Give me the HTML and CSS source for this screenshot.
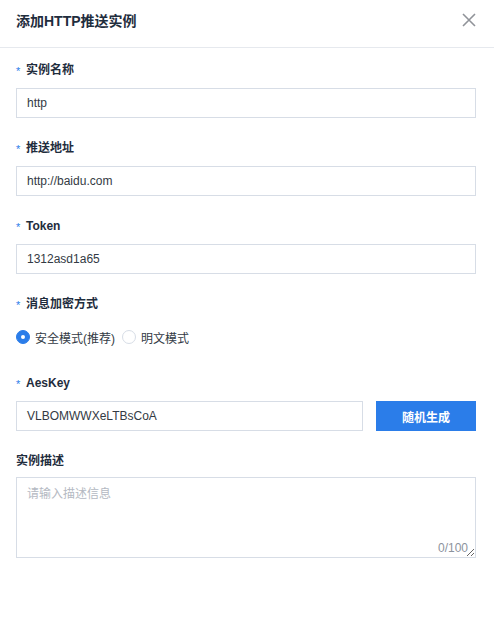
FILE: index.html
```html
<!DOCTYPE html>
<html lang="zh">
<head>
<meta charset="utf-8">
<link rel="stylesheet" href="styles.css">
</head>
<body>
<div class="dialog">
  <div class="header">
    <span class="title">添加HTTP推送实例</span>
    <svg class="close" width="14" height="14" viewBox="0 0 14 14"><path d="M1 1L13 13M13 1L1 13" stroke="#909399" stroke-width="1.6" fill="none"/></svg>
  </div>
  <div class="form">
    <div class="item">
      <div class="label"><span class="req">*</span>实例名称</div>
      <div class="input">http</div>
    </div>
    <div class="item">
      <div class="label"><span class="req">*</span>推送地址</div>
      <div class="input">http://baidu.com</div>
    </div>
    <div class="item">
      <div class="label"><span class="req">*</span>Token</div>
      <div class="input">1312asd1a65</div>
    </div>
    <div class="item">
      <div class="label"><span class="req">*</span>消息加密方式</div>
      <div class="radios">
        <span class="radio"><span class="dot on"></span>安全模式(推荐)</span>
        <span class="radio"><span class="dot"></span>明文模式</span>
      </div>
    </div>
    <div class="item">
      <div class="label"><span class="req">*</span>AesKey</div>
      <div class="row">
        <div class="input grow">VLBOMWWXeLTBsCoA</div>
        <button class="btn">随机生成</button>
      </div>
    </div>
    <div class="item">
      <div class="label short">实例描述</div>
      <div class="ta-wrap">
        <textarea class="ta" placeholder="请输入描述信息"></textarea>
        <span class="count">0/100</span>
      </div>
    </div>
  </div>
</div>
</body>
</html>
```
FILE: styles.css
```css
* { box-sizing: border-box; }
body {
  margin: 0;
  background: #fff;
  font-family: "Liberation Sans", Arial, "Noto Sans CJK SC", sans-serif;
  font-size: 12px;
  color: #1f2d3d;
}
.header {
  height: 48px;
  border-bottom: 1px solid #e6e9ee;
  display: flex;
  align-items: center;
  justify-content: space-between;
  padding: 0 18px 0 16px;
}
.title {
  font-size: 14px;
  font-weight: bold;
  color: #1f2d3d;
  margin-top: -7px;
}
.close { margin-top: -7px; }
.form {
  padding: 12px 18px 0 16px;
}
.item { margin-bottom: 20px; }
.label {
  height: 20px;
  line-height: 20px;
  font-weight: bold;
  font-size: 12px;
  color: #1f2d3d;
  margin-bottom: 8px;
  display: flex;
  align-items: center;
}
.label.short { margin-bottom: 6px; }
.req {
  color: #2b7de9;
  width: 10px;
  font-weight: normal;
  font-size: 11px;
  position: relative;
  top: 1px;
}
.input {
  height: 30px;
  border: 1px solid #d7dde6;
  line-height: 28px;
  padding: 0 10px;
  color: #333a44;
  font-size: 12px;
}
.radios {
  height: 30px;
  display: flex;
  align-items: center;
  margin-bottom: 21px;
}
.radio {
  display: inline-flex;
  align-items: center;
  color: #333a44;
  margin-right: 7px;
}
.dot {
  width: 14px;
  height: 14px;
  border-radius: 50%;
  border: 1px solid #d7dde6;
  margin-right: 5px;
  display: inline-block;
  position: relative;
}
.dot.on {
  background: #2b7de9;
  border-color: #2b7de9;
}
.dot.on::after {
  content: "";
  position: absolute;
  width: 4px;
  height: 4px;
  border-radius: 50%;
  background: #fff;
  left: 4px;
  top: 4px;
}
.item:has(.radios) { margin-bottom: 0; }
.row {
  display: flex;
  gap: 13px;
}
.grow { flex: 1; }
.btn {
  width: 100px;
  height: 30px;
  border: none;
  background: #2b7de9;
  color: #fff;
  font-family: inherit;
  font-size: 12px;
  font-weight: bold;
  padding: 0;
}
.ta-wrap { position: relative; }
.ta {
  display: block;
  width: 100%;
  height: 81px;
  border: 1px solid #d7dde6;
  padding: 6px 10px;
  font-family: inherit;
  font-size: 12px;
  color: #333a44;
  outline: none;
}
.ta::placeholder { color: #b4b9c2; }
.count {
  position: absolute;
  right: 8px;
  bottom: 3px;
  color: #8c939d;
  font-size: 12px;
}
```
